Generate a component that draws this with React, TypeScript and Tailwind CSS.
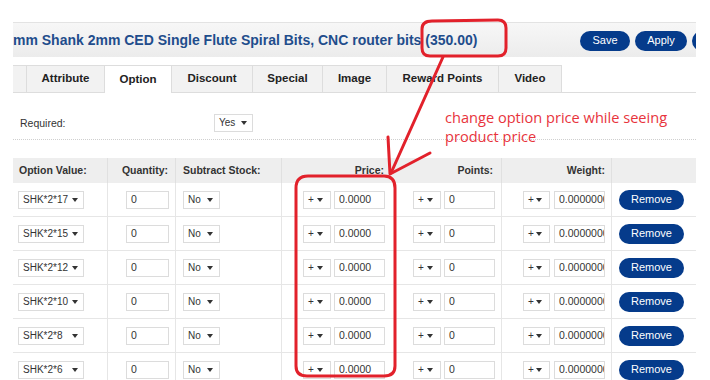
import React from "react";

function Caret() {
  return <span className="inline-block h-0 w-0 shrink-0 border-x-[3px] border-t-[4px] border-x-transparent border-t-[#333]" />;
}

function Sel({ cls, label }: { cls: string; label: string }) {
  return (
    <div className={"flex h-[18px] items-center justify-between border border-[#dcdcdc] bg-white text-[10px] leading-none text-[#333] " + cls}>
      <span className="whitespace-nowrap">{label}</span>
      <Caret />
    </div>
  );
}

function Inp({ cls, value }: { cls: string; value: string }) {
  return (
    <div className={"flex h-[18px] items-center overflow-hidden whitespace-nowrap border border-[#dcdcdc] bg-white pl-[4px] text-[10.5px] leading-none text-[#333] " + cls}>
      {value}
    </div>
  );
}

const rows = ["SHK*2*17", "SHK*2*15", "SHK*2*12", "SHK*2*10", "SHK*2*8", "SHK*2*6"];

const tabs: { name: string; w: string; active?: boolean }[] = [
  { name: "", w: "w-[14px]" },
  { name: "Attribute", w: "w-[78px]" },
  { name: "Option", w: "w-[67px]", active: true },
  { name: "Discount", w: "w-[81px]" },
  { name: "Special", w: "w-[70px]" },
  { name: "Image", w: "w-[64px]" },
  { name: "Reward Points", w: "w-[112px]" },
  { name: "Video", w: "w-[63px]" },
];

const grid = "grid grid-cols-[94px_68px_106px_120px_100px_110px_85px]";

export default function App() {
  return (
    <div className="relative h-[380px] w-[710px] overflow-hidden bg-white font-['Liberation_Sans',Arial,sans-serif] text-[#333]">
      <div className="ml-[13px] w-[683px] pt-[22px]">
        {/* Header bar */}
        <div className="flex h-[35px] items-center justify-between overflow-hidden border-t border-[#e3e3e3] bg-gradient-to-b from-[#f7f7f7] to-[#ececec]">
          <div className="whitespace-nowrap text-[14px] font-bold text-[#1f4d8c]">
            mm Shank 2mm CED Single Flute Spiral Bits, CNC router bits (350.00)
          </div>
          <div className="mr-[-10px] flex shrink-0 gap-[5px] pt-[1px]">
            <div className="flex h-[20px] w-[50px] items-center justify-center rounded-full bg-[#053b8b] text-[11px] text-white">Save</div>
            <div className="flex h-[20px] w-[52px] items-center justify-center rounded-full bg-[#053b8b] text-[11px] text-white">Apply</div>
            <div className="h-[20px] w-[14px] rounded-l-full bg-[#053b8b]" />
          </div>
        </div>

        {/* Tabs */}
        <div className="mt-[8px] flex h-[28px] border-b border-[#dddddd]">
          {tabs.map((t, i) => (
            <div
              key={i}
              className={
                "flex items-center justify-center border-r border-t border-[#dddddd] text-[11.5px] font-bold text-[#222] " +
                t.w +
                (t.active ? " mb-[-1px] bg-white" : " bg-[#f2f2f2]")
              }
            >
              {t.name}
            </div>
          ))}
        </div>

        {/* Required */}
        <div className="flex h-[47px] items-start border-b border-dotted border-[#cfcfcf] pt-[21px]">
          <div className="ml-[7px] w-[194px] pt-[2px] text-[10.5px] text-[#333]">Required:</div>
          <Sel cls="w-[39px] pl-[4px] pr-[5px]" label="Yes" />
        </div>

        {/* Table */}
        <div className="mt-[18px]">
          <div className={grid + " h-[25px] bg-[#eeeeee] text-[10.5px] font-bold text-[#333]"}>
            <div className="flex items-center pl-[6px]">Option Value:</div>
            <div className="flex items-center justify-end border-l border-[#e0e0e0] pr-[7px]">Quantity:</div>
            <div className="flex items-center border-l border-[#e0e0e0] pl-[7px]">Subtract Stock:</div>
            <div className="flex items-center justify-end border-l border-[#e0e0e0] pr-[17px]">Price:</div>
            <div className="flex items-center justify-end pr-[8px]">Points:</div>
            <div className="flex items-center justify-end border-l border-[#e0e0e0] pr-[6px]">Weight:</div>
            <div className="border-l border-[#e0e0e0]" />
          </div>
          {rows.map((r) => (
            <div key={r} className={grid + " h-[34px] border-b border-[#e6e6e6]"}>
              <div className="flex items-center pl-[5px]">
                <Sel cls="w-[66px] pl-[4px] pr-[5px]" label={r} />
              </div>
              <div className="flex items-center justify-end border-l border-[#e6e6e6] pr-[6px]">
                <Inp cls="w-[43px]" value="0" />
              </div>
              <div className="flex items-center border-l border-[#e6e6e6] pl-[7px]">
                <Sel cls="w-[37px] pl-[4px] pr-[6px]" label="No" />
              </div>
              <div className="flex items-center justify-end gap-[3px] border-l border-[#e6e6e6] pr-[16px]">
                <Sel cls="w-[28px] pl-[4px] pr-[7px]" label="+" />
                <Inp cls="w-[51px]" value="0.0000" />
              </div>
              <div className="flex items-center justify-end gap-[3px] pr-[6px]">
                <Sel cls="w-[28px] pl-[4px] pr-[7px]" label="+" />
                <Inp cls="w-[51px]" value="0" />
              </div>
              <div className="flex items-center justify-end gap-[4px] border-l border-[#e6e6e6] pr-[6px]">
                <Sel cls="w-[27px] pl-[4px] pr-[7px]" label="+" />
                <Inp cls="w-[51px]" value="0.0000000" />
              </div>
              <div className="flex items-center border-l border-[#e6e6e6] pl-[7px]">
                <div className="flex h-[20px] w-[65px] items-center justify-center rounded-full bg-[#053b8b] text-[11px] text-white">Remove</div>
              </div>
            </div>
          ))}
        </div>
      </div>

      {/* Annotation text */}
      <div className="absolute left-[445px] top-[108px] font-['Open_Sans',sans-serif] text-[14.6px] leading-[19px] text-[#e8343c]">
        change option price while seeing
        <br />
        product price
      </div>

      {/* Annotation drawing */}
      <svg className="pointer-events-none absolute left-0 top-0" width="710" height="380" viewBox="0 0 710 380">
        <g fill="none" stroke="#e2212b" strokeWidth="3" strokeLinecap="round" strokeLinejoin="round">
          <path d="M432 21 L498 20 Q506 20 506 28 L506 48 Q506 56 498 56 L430 56 Q422 56 422 48 L422 29 Q422 21 432 21 Z" />
          <path d="M308 176 L384 176 Q395 176 395 188 L395 366 Q395 376 384 376 L307 376 Q296 376 296 366 L296 188 Q296 176 308 176 Z" />
          <path d="M443 57 L391 173" />
          <path d="M388 137 L390 174 L430 153" />
        </g>
      </svg>
    </div>
  );
}
